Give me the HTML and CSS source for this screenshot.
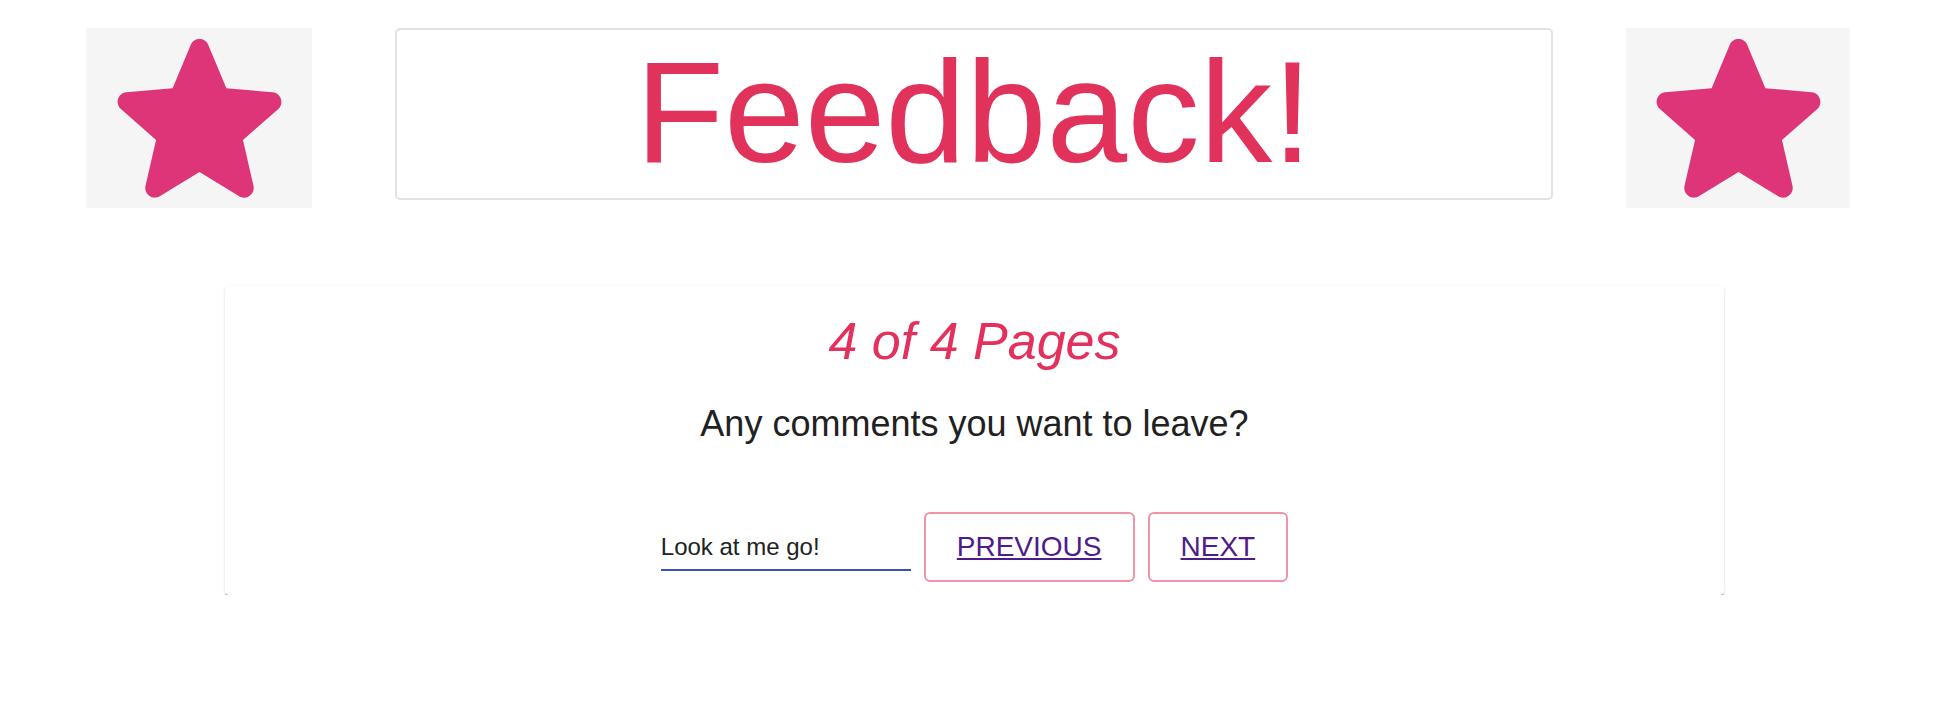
FILE: index.html
```html
<!DOCTYPE html>
<html lang="en">
<head>
<meta charset="utf-8">
<title>Feedback</title>
<link rel="stylesheet" href="styles.css">
</head>
<body>
<header class="top">
  <div class="star-box star-left">
    <svg class="star" viewBox="3.38 3.56 17.24 16.4" preserveAspectRatio="none" aria-hidden="true">
      <path d="M12 17.27l4.15 2.51c.76.46 1.69-.22 1.49-1.08l-1.1-4.72 3.67-3.18c.67-.58.31-1.68-.57-1.75l-4.83-.41-1.89-4.46c-.34-.81-1.5-.81-1.84 0L9.19 8.63l-4.83.41c-.88.07-1.24 1.17-.57 1.75l3.67 3.18-1.1 4.72c-.2.86.73 1.54 1.49 1.08l4.15-2.5z"/>
    </svg>
  </div>
  <div class="title-box">
    <h1 class="title">Feedback!</h1>
  </div>
  <div class="star-box star-right">
    <svg class="star" viewBox="3.38 3.56 17.24 16.4" preserveAspectRatio="none" aria-hidden="true">
      <path d="M12 17.27l4.15 2.51c.76.46 1.69-.22 1.49-1.08l-1.1-4.72 3.67-3.18c.67-.58.31-1.68-.57-1.75l-4.83-.41-1.89-4.46c-.34-.81-1.5-.81-1.84 0L9.19 8.63l-4.83.41c-.88.07-1.24 1.17-.57 1.75l3.67 3.18-1.1 4.72c-.2.86.73 1.54 1.49 1.08l4.15-2.5z"/>
    </svg>
  </div>
</header>

<main class="card">
  <h2 class="page-count">4 of 4 Pages</h2>
  <p class="question">Any comments you want to leave?</p>
  <div class="controls">
    <input class="comment" type="text" value="Look at me go!">
    <a class="btn" href="#prev">PREVIOUS</a>
    <a class="btn" href="#next">NEXT</a>
  </div>
</main>
</body>
</html>
```

FILE: styles.css
```css
html, body {
  margin: 0;
  padding: 0;
  background: #ffffff;
}

body {
  font-family: "Liberation Sans", Arial, Helvetica, sans-serif;
  color: #212121;
}

.top {
  display: flex;
  align-items: flex-start;
  padding: 28px 0 0 86px;
}

.star-box {
  height: 180px;
  background: #f5f5f5;
  display: flex;
  align-items: center;
  justify-content: center;
  flex: none;
}

.star-left {
  width: 226px;
}

.star-right {
  width: 224px;
}

.star {
  width: 165px;
  height: 159px;
  fill: #de3579;
  display: block;
}

.title-box {
  flex: none;
  box-sizing: border-box;
  width: 1158px;
  height: 172px;
  margin: 0 73px 0 83px;
  border: 2px solid #e2e2e2;
  border-radius: 5px;
  display: flex;
  align-items: center;
  justify-content: center;
  padding-bottom: 4px;
}

.title {
  margin: 0;
  font-size: 145px;
  font-weight: 400;
  line-height: 1;
  color: #e1325c;
}

.card {
  box-sizing: border-box;
  width: 1499px;
  margin: 78px 0 0 225px;
  padding: 24px 0 13px;
  background: #fff;
  border-radius: 4px;
  box-shadow: 0 2px 1px -1px rgba(0, 0, 0, 0.5),
              0 1px 1px 0 rgba(0, 0, 0, 0.14),
              0 1px 3px 0 rgba(0, 0, 0, 0.12);
  text-align: center;
}

.page-count {
  margin: 0;
  font-size: 52px;
  line-height: 1.2;
  font-style: italic;
  font-weight: 400;
  color: #e3305c;
}

.question {
  margin: 30px 0 0;
  font-size: 36px;
  line-height: 1.2;
  color: #212121;
}

.controls {
  display: flex;
  justify-content: center;
  align-items: flex-start;
  gap: 13px;
  margin-top: 66px;
}

.comment {
  align-self: flex-end;
  box-sizing: border-box;
  width: 250px;
  height: 45px;
  margin: 0 0 11px;
  padding: 0;
  border: none;
  border-bottom: 2px solid #3f51b5;
  outline: none;
  background: transparent;
  font-family: inherit;
  font-size: 24px;
  color: #212121;
}

.btn {
  display: block;
  padding: 17px 31px;
  border: 2px solid #f093a8;
  border-radius: 6px;
  font-size: 28px;
  line-height: 32px;
  color: #4f1b8b;
  text-decoration: underline;
}
```
